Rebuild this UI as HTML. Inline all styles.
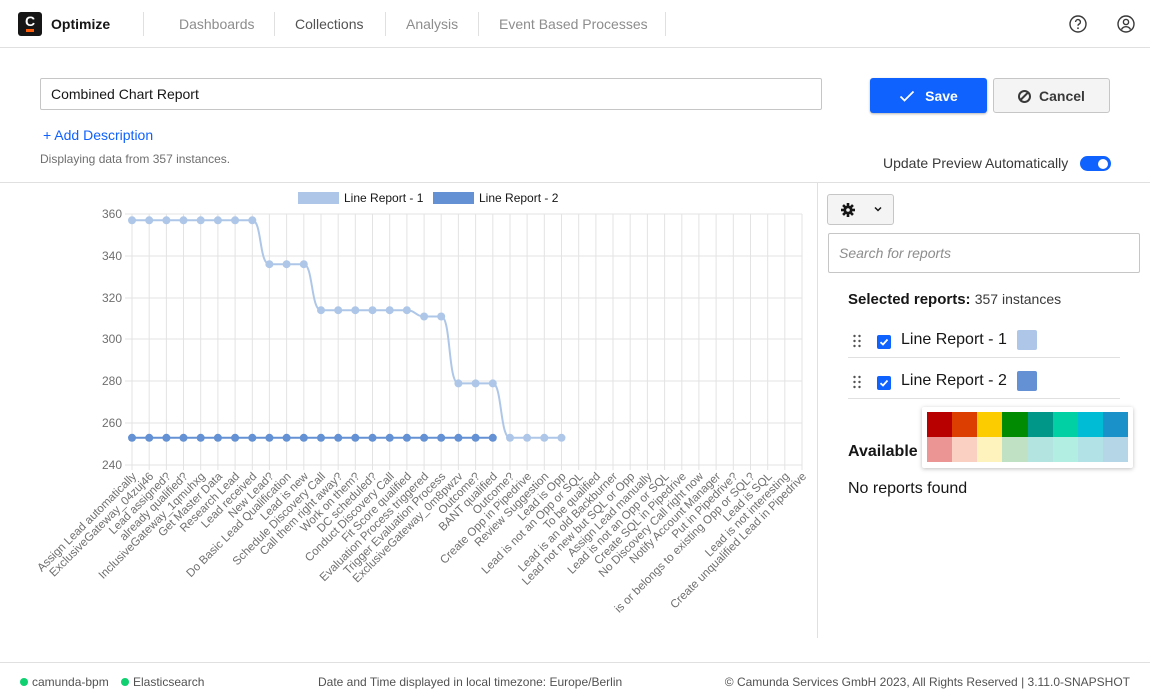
<!DOCTYPE html>
<html><head><meta charset="utf-8"><style>
*{box-sizing:border-box;margin:0;padding:0}
body{width:1150px;height:700px;background:#fff;font-family:"Liberation Sans",sans-serif;color:#161616;position:relative;overflow:hidden}
.a{position:absolute}
.nav{font-size:14px;color:#8d8d8d;top:16px}
.sep{top:12px;width:1px;height:24px;background:#e0e0e0}
</style></head><body>
<div class="a" style="left:0;top:0;width:1150px;height:48px;border-bottom:1px solid #e0e0e0"></div>
<div class="a" style="left:18px;top:12px;width:24px;height:24px;background:#161616;border-radius:3px"></div>
<div class="a" style="left:25px;top:13px;color:#fff;font-weight:bold;font-size:14px">C</div>
<div class="a" style="left:26px;top:29px;width:8px;height:3px;background:#fc5d0d"></div>
<div class="a" style="left:51px;top:16px;font-size:14px;font-weight:bold">Optimize</div>
<div class="a sep" style="left:143px"></div>
<div class="a nav" style="left:179px">Dashboards</div>
<div class="a sep" style="left:274px"></div>
<div class="a nav" style="left:295px;color:#525252">Collections</div>
<div class="a sep" style="left:385px"></div>
<div class="a nav" style="left:406px">Analysis</div>
<div class="a sep" style="left:478px"></div>
<div class="a nav" style="left:499px">Event Based Processes</div>
<div class="a sep" style="left:665px"></div>
<svg class="a" style="left:1068px;top:14px" width="20" height="20" viewBox="0 0 20 20"><circle cx="10" cy="10" r="8" fill="none" stroke="#393939" stroke-width="1.4"/><path d="M7.6 8a2.4 2.4 0 1 1 3.3 2.2c-.7.3-.9.8-.9 1.5" fill="none" stroke="#393939" stroke-width="1.4"/><circle cx="10" cy="14.2" r=".9" fill="#393939"/></svg>
<svg class="a" style="left:1116px;top:14px" width="20" height="20" viewBox="0 0 20 20"><circle cx="10" cy="10" r="8" fill="none" stroke="#393939" stroke-width="1.4"/><circle cx="10" cy="8" r="2.6" fill="none" stroke="#393939" stroke-width="1.4"/><path d="M5.5 15.5c1-2 2.5-2.8 4.5-2.8s3.5.8 4.5 2.8" fill="none" stroke="#393939" stroke-width="1.4"/></svg>

<div class="a" style="left:40px;top:78px;width:782px;height:32px;border:1px solid #c6c6c6;border-radius:2px;padding:7px 10px;font-size:14px">Combined Chart Report</div>
<div class="a" style="left:870px;top:78px;width:117px;height:35px;background:#0f62fe;border-radius:3px;box-shadow:0 1px 2px rgba(0,0,0,.3);color:#fff;font-weight:bold;font-size:14px;padding-top:10px;text-align:center"><svg width="16" height="12" viewBox="0 0 16 12" style="margin-right:10px;vertical-align:-1px"><path d="M1.5 6.5L5.5 10.5 14.5 1.5" fill="none" stroke="#fff" stroke-width="1.8"/></svg>Save</div>
<div class="a" style="left:993px;top:78px;width:117px;height:35px;background:#f4f4f4;border:1px solid #c6c6c6;border-radius:3px;color:#393939;font-weight:bold;font-size:14px;padding-top:9px;text-align:center"><span style="display:inline-block;width:13px;height:13px;border:2px solid #393939;border-radius:50%;vertical-align:-2px;margin-right:8px;position:relative"><span style="position:absolute;left:3px;top:-1px;width:2px;height:11px;background:#393939;transform:rotate(45deg)"></span></span>Cancel</div>
<div class="a" style="left:43px;top:127px;font-size:14px;color:#0f62fe">+ Add Description</div>
<div class="a" style="left:40px;top:152px;font-size:12px;color:#6f6f6f">Displaying data from 357 instances.</div>
<div class="a" style="left:883px;top:155px;font-size:14px;color:#393939">Update Preview Automatically</div>
<div class="a" style="left:1080px;top:156px;width:31px;height:15px;background:#0f62fe;border-radius:8px"><div class="a" style="right:3px;top:2.5px;width:10px;height:10px;border-radius:50%;background:#fff"></div></div>

<div class="a" style="left:0;top:182px;width:1150px;height:1px;background:#e0e0e0"></div>
<div class="a" style="left:817px;top:183px;width:1px;height:455px;background:#e0e0e0"></div>

<svg class="a" style="left:0;top:183px" width="817" height="460" viewBox="0 183 817 460" font-family="Liberation Sans, sans-serif">
<g stroke="#e3e3e3" stroke-width="1">
<path d="M125 214H802M125 256H802M125 298H802M125 339H802M125 381H802M125 423H802M125 465H802"/>
</g>
<g stroke="#e3e3e3">
<path d="M132 214V470M149.2 214V470M166.4 214V470M183.5 214V470M200.7 214V470M217.9 214V470M235.1 214V470M252.3 214V470M269.4 214V470M286.6 214V470M303.8 214V470M321 214V470M338.2 214V470M355.3 214V470M372.5 214V470M389.7 214V470M406.9 214V470M424.1 214V470M441.2 214V470M458.4 214V470M475.6 214V470M492.8 214V470M510 214V470M527.1 214V470M544.3 214V470M561.5 214V470M578.7 214V470M595.9 214V470M613 214V470M630.2 214V470M647.4 214V470M664.6 214V470M681.8 214V470M698.9 214V470M716.1 214V470M733.3 214V470M750.5 214V470M767.7 214V470M784.8 214V470M802 214V470"/>
</g>
<g font-size="12" fill="#6f6f6f" text-anchor="end">
<text x="122" y="218">360</text><text x="122" y="260">340</text><text x="122" y="302">320</text><text x="122" y="343">300</text><text x="122" y="385">280</text><text x="122" y="427">260</text><text x="122" y="469">240</text>
</g>
<rect x="298" y="192" width="41" height="12" fill="#aec7e8"/>
<text x="344" y="202" font-size="12" fill="#161616">Line Report - 1</text>
<rect x="433" y="192" width="41" height="12" fill="#6391d3"/>
<text x="479" y="202" font-size="12" fill="#161616">Line Report - 2</text>
<path d="M132 437.8H492.8" stroke="#6391d3" stroke-width="2" fill="none"/>
<g fill="#6391d3"><circle cx="132" cy="437.8" r="4"/><circle cx="149.2" cy="437.8" r="4"/><circle cx="166.4" cy="437.8" r="4"/><circle cx="183.5" cy="437.8" r="4"/><circle cx="200.7" cy="437.8" r="4"/><circle cx="217.9" cy="437.8" r="4"/><circle cx="235.1" cy="437.8" r="4"/><circle cx="252.3" cy="437.8" r="4"/><circle cx="269.4" cy="437.8" r="4"/><circle cx="286.6" cy="437.8" r="4"/><circle cx="303.8" cy="437.8" r="4"/><circle cx="321" cy="437.8" r="4"/><circle cx="338.2" cy="437.8" r="4"/><circle cx="355.3" cy="437.8" r="4"/><circle cx="372.5" cy="437.8" r="4"/><circle cx="389.7" cy="437.8" r="4"/><circle cx="406.9" cy="437.8" r="4"/><circle cx="424.1" cy="437.8" r="4"/><circle cx="441.2" cy="437.8" r="4"/><circle cx="458.4" cy="437.8" r="4"/><circle cx="475.6" cy="437.8" r="4"/><circle cx="492.8" cy="437.8" r="4"/></g>
<path d="M132 220.3H252.3C262 220.3 259 264.2 269.4 264.2H303.8C313 264.2 311 310.2 321 310.2H406.9C415 310.2 416 316.5 424.1 316.5H441.2C451 316.5 448 383.4 458.4 383.4H492.8C502 383.4 500 437.8 510 437.8H561.5" stroke="#aec7e8" stroke-width="2" fill="none"/>
<g fill="#aec7e8"><circle cx="132" cy="220.3" r="4"/><circle cx="149.2" cy="220.3" r="4"/><circle cx="166.4" cy="220.3" r="4"/><circle cx="183.5" cy="220.3" r="4"/><circle cx="200.7" cy="220.3" r="4"/><circle cx="217.9" cy="220.3" r="4"/><circle cx="235.1" cy="220.3" r="4"/><circle cx="252.3" cy="220.3" r="4"/><circle cx="269.4" cy="264.2" r="4"/><circle cx="286.6" cy="264.2" r="4"/><circle cx="303.8" cy="264.2" r="4"/><circle cx="321" cy="310.2" r="4"/><circle cx="338.2" cy="310.2" r="4"/><circle cx="355.3" cy="310.2" r="4"/><circle cx="372.5" cy="310.2" r="4"/><circle cx="389.7" cy="310.2" r="4"/><circle cx="406.9" cy="310.2" r="4"/><circle cx="424.1" cy="316.5" r="4"/><circle cx="441.2" cy="316.5" r="4"/><circle cx="458.4" cy="383.4" r="4"/><circle cx="475.6" cy="383.4" r="4"/><circle cx="492.8" cy="383.4" r="4"/><circle cx="510" cy="437.8" r="4"/><circle cx="527.1" cy="437.8" r="4"/><circle cx="544.3" cy="437.8" r="4"/><circle cx="561.5" cy="437.8" r="4"/></g>
<g font-size="11.6" fill="#6f6f6f" text-anchor="end">
<text transform="translate(137 477) rotate(-45)">Assign Lead automatically</text>
<text transform="translate(154.2 477) rotate(-45)">ExclusiveGateway_04zuj46</text>
<text transform="translate(171.4 477) rotate(-45)">Lead assigned?</text>
<text transform="translate(188.5 477) rotate(-45)">already qualified?</text>
<text transform="translate(205.7 477) rotate(-45)">InclusiveGateway_1qmuhxg</text>
<text transform="translate(222.9 477) rotate(-45)">Get Master Data</text>
<text transform="translate(240.1 477) rotate(-45)">Research Lead</text>
<text transform="translate(257.3 477) rotate(-45)">Lead received</text>
<text transform="translate(274.4 477) rotate(-45)">New Lead?</text>
<text transform="translate(291.6 477) rotate(-45)">Do Basic Lead Qualification</text>
<text transform="translate(308.8 477) rotate(-45)">Lead is new</text>
<text transform="translate(326 477) rotate(-45)">Schedule Discovery Call</text>
<text transform="translate(343.2 477) rotate(-45)">Call them right away?</text>
<text transform="translate(360.3 477) rotate(-45)">Work on them?</text>
<text transform="translate(377.5 477) rotate(-45)">DC scheduled?</text>
<text transform="translate(394.7 477) rotate(-45)">Conduct Discovery Call</text>
<text transform="translate(411.9 477) rotate(-45)">Fit Score qualified</text>
<text transform="translate(429.1 477) rotate(-45)">Evaluation Process triggered</text>
<text transform="translate(446.2 477) rotate(-45)">Trigger Evaluation Process</text>
<text transform="translate(463.4 477) rotate(-45)">ExclusiveGateway_0m8pwzv</text>
<text transform="translate(480.6 477) rotate(-45)">Outcome?</text>
<text transform="translate(497.8 477) rotate(-45)">BANT qualified</text>
<text transform="translate(515 477) rotate(-45)">Outcome?</text>
<text transform="translate(532.1 477) rotate(-45)">Create Opp in Pipedrive</text>
<text transform="translate(549.3 477) rotate(-45)">Review Suggestion</text>
<text transform="translate(566.5 477) rotate(-45)">Lead is Opp</text>
<text transform="translate(583.7 477) rotate(-45)">Lead is not an Opp or SQL</text>
<text transform="translate(600.9 477) rotate(-45)">To be qualified</text>
<text transform="translate(618 477) rotate(-45)">Lead is an old Backburner</text>
<text transform="translate(635.2 477) rotate(-45)">Lead not new but SQL or Opp</text>
<text transform="translate(652.4 477) rotate(-45)">Assign Lead manually</text>
<text transform="translate(669.6 477) rotate(-45)">Lead is not an Opp or SQL</text>
<text transform="translate(686.8 477) rotate(-45)">Create SQL in Pipedrive</text>
<text transform="translate(703.9 477) rotate(-45)">No Discovery Call right now</text>
<text transform="translate(721.1 477) rotate(-45)">Notify Account Manager</text>
<text transform="translate(738.3 477) rotate(-45)">Put in Pipedrive?</text>
<text transform="translate(755.5 477) rotate(-45)">is or belongs to existing Opp or SQL?</text>
<text transform="translate(772.7 477) rotate(-45)">Lead is SQL</text>
<text transform="translate(789.8 477) rotate(-45)">Lead is not interesting</text>
<text transform="translate(807 477) rotate(-45)">Create unqualified Lead in Pipedrive</text>
</g>
</svg>

<div class="a" style="left:827px;top:194px;width:67px;height:31px;background:#f4f4f4;border:1px solid #c6c6c6;border-radius:3px"></div>
<svg class="a" style="left:840px;top:202px" width="16" height="16" viewBox="0 0 16 16"><g fill="#161616"><circle cx="8" cy="8" r="4.5"/><rect x="6.7" y="1" width="2.6" height="14"/><rect x="1" y="6.7" width="14" height="2.6"/><rect x="6.7" y="1" width="2.6" height="14" transform="rotate(45 8 8)"/><rect x="6.7" y="1" width="2.6" height="14" transform="rotate(-45 8 8)"/></g><circle cx="8" cy="8" r="1.8" fill="#f4f4f4"/></svg>
<svg class="a" style="left:873px;top:204px" width="10" height="10" viewBox="0 0 10 10"><path d="M2 3.5L5 6.5 8 3.5" fill="none" stroke="#161616" stroke-width="1.5"/></svg>
<div class="a" style="left:828px;top:233px;width:312px;height:40px;border:1px solid #c6c6c6;border-radius:2px;padding:11px 10px;font-size:14px;font-style:italic;color:#8d8d8d">Search for reports</div>
<div class="a" style="left:848px;top:291px;font-size:15px"><b>Selected reports:</b> <span style="font-size:14px;color:#393939">357 instances</span></div>
<div class="a" style="left:848px;top:357px;width:272px;height:1px;background:#e0e0e0"></div>
<div class="a" style="left:848px;top:398px;width:272px;height:1px;background:#e0e0e0"></div>
<svg class="a" style="left:853px;top:334px" width="8" height="14" viewBox="0 0 8 14"><g fill="#525252"><circle cx="1.5" cy="2" r="1.2"/><circle cx="6.5" cy="2" r="1.2"/><circle cx="1.5" cy="7" r="1.2"/><circle cx="6.5" cy="7" r="1.2"/><circle cx="1.5" cy="12" r="1.2"/><circle cx="6.5" cy="12" r="1.2"/></g></svg>
<svg class="a" style="left:853px;top:375px" width="8" height="14" viewBox="0 0 8 14"><g fill="#525252"><circle cx="1.5" cy="2" r="1.2"/><circle cx="6.5" cy="2" r="1.2"/><circle cx="1.5" cy="7" r="1.2"/><circle cx="6.5" cy="7" r="1.2"/><circle cx="1.5" cy="12" r="1.2"/><circle cx="6.5" cy="12" r="1.2"/></g></svg>
<div class="a" style="left:877px;top:335px;width:14px;height:14px;background:#0f62fe;border-radius:2px"><svg width="14" height="14" viewBox="0 0 14 14"><path d="M3.5 7.2L6 9.5 10.5 4.5" fill="none" stroke="#fff" stroke-width="1.8"/></svg></div>
<div class="a" style="left:877px;top:376px;width:14px;height:14px;background:#0f62fe;border-radius:2px"><svg width="14" height="14" viewBox="0 0 14 14"><path d="M3.5 7.2L6 9.5 10.5 4.5" fill="none" stroke="#fff" stroke-width="1.8"/></svg></div>
<div class="a" style="left:901px;top:331px;font-size:16px">Line Report - 1</div>
<div class="a" style="left:901px;top:372px;font-size:16px">Line Report - 2</div>
<div class="a" style="left:1017px;top:330px;width:20px;height:20px;background:#aec7e8;border-radius:2px"></div>
<div class="a" style="left:1017px;top:371px;width:20px;height:20px;background:#6391d3;border-radius:2px"></div>
<div class="a" style="left:848px;top:443px;font-size:16px;font-weight:bold">Available</div>
<div class="a" style="left:848px;top:480px;font-size:16px">No reports found</div>
<div class="a" style="left:922px;top:407px;width:211px;height:61px;background:#fff;box-shadow:0 1px 4px rgba(0,0,0,.25);border-radius:2px;padding:5px">
<div style="display:flex;height:25px"><i style="flex:1;background:#b80000"></i><i style="flex:1;background:#db3e00"></i><i style="flex:1;background:#fccb00"></i><i style="flex:1;background:#008b02"></i><i style="flex:1;background:#009688"></i><i style="flex:1;background:#00d0a4"></i><i style="flex:1;background:#00bcd4"></i><i style="flex:1;background:#1a91c9"></i></div>
<div style="display:flex;height:25px"><i style="flex:1;background:#eb9694"></i><i style="flex:1;background:#fad0c3"></i><i style="flex:1;background:#fef3bd"></i><i style="flex:1;background:#c1e1c5"></i><i style="flex:1;background:#b3e4e0"></i><i style="flex:1;background:#b3eee2"></i><i style="flex:1;background:#b2e1e6"></i><i style="flex:1;background:#b4d6e6"></i></div>
</div>

<div class="a" style="left:0;top:662px;width:1150px;height:1px;background:#e0e0e0"></div>
<div class="a" style="left:20px;top:678px;width:8px;height:8px;border-radius:50%;background:#10d070"></div>
<div class="a" style="left:32px;top:675px;font-size:12px;color:#525252">camunda-bpm</div>
<div class="a" style="left:121px;top:678px;width:8px;height:8px;border-radius:50%;background:#10d070"></div>
<div class="a" style="left:133px;top:675px;font-size:12px;color:#525252">Elasticsearch</div>
<div class="a" style="left:318px;top:675px;font-size:12px;color:#525252">Date and Time displayed in local timezone: Europe/Berlin</div>
<div class="a" style="right:20px;top:675px;font-size:12px;color:#525252">© Camunda Services GmbH 2023, All Rights Reserved | 3.11.0-SNAPSHOT</div>
</body></html>
